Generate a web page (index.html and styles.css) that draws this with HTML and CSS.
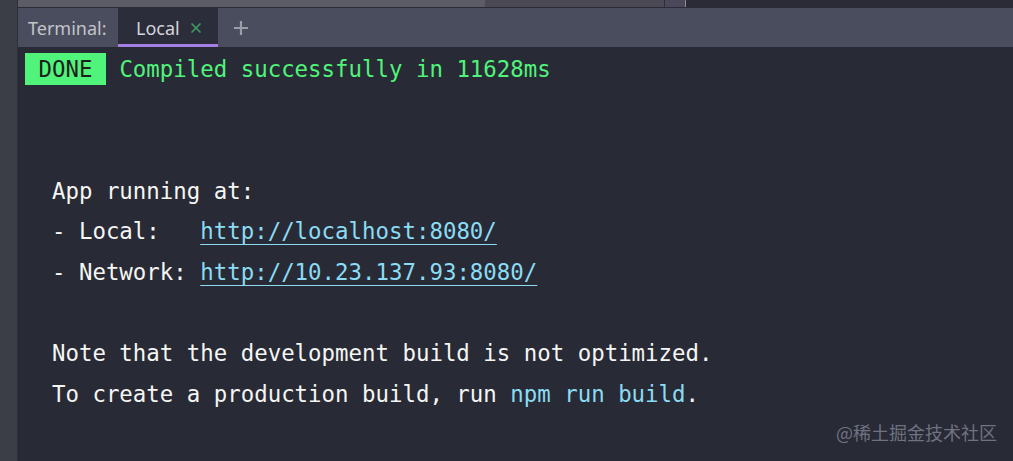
FILE: index.html
```html
<!DOCTYPE html>
<html>
<head>
<meta charset="utf-8">
<link rel="stylesheet" href="styles.css">
</head>
<body>
<div class="app">
  <div class="gutter"></div>
  <div class="main">
    <div class="topstrip">
      <div class="seg seg-a"></div>
      <div class="seg seg-b"></div>
      <div class="seg seg-c"></div>
      <div class="seg seg-d"></div>
    </div>
    <div class="tabbar">
      <div class="tab-label">Terminal:</div>
      <div class="tab active">
        <span class="tab-name">Local</span>
        <svg class="tab-close" width="12" height="12" viewBox="0 0 12 12"><path d="M1.5 1.5L10.5 10.5M10.5 1.5L1.5 10.5" stroke="#3f9b62" stroke-width="1.6" fill="none"/></svg>
      </div>
      <div class="tab-add">
        <svg width="16" height="16" viewBox="0 0 16 16"><path d="M8 1V15M1 8H15" stroke="#9a9ca6" stroke-width="2.2" fill="none"/></svg>
      </div>
    </div>
    <div class="term">
      <div class="line"><span class="badge"> DONE </span> <span class="green">Compiled successfully in 11628ms</span></div>
      <div class="line"></div>
      <div class="line"></div>
      <div class="line">  App running at:</div>
      <div class="line">  - Local:   <span class="link">http://localhost:8080/</span></div>
      <div class="line">  - Network: <span class="link">http://10.23.137.93:8080/</span></div>
      <div class="line"></div>
      <div class="line">  Note that the development build is not optimized.</div>
      <div class="line">  To create a production build, run <span class="cyan">npm run build</span>.</div>
    </div>
  </div>
</div>
<div class="watermark">@稀土掘金技术社区</div>
</body>
</html>
```

FILE: styles.css
```css
html, body {
  margin: 0;
  padding: 0;
  height: 100%;
  background: #282a36;
  overflow: hidden;
}
.app {
  display: flex;
  height: 461px;
}
.gutter {
  width: 18px;
  background: #3b3d47;
  border-right: 1px solid #2e2f39;
  box-sizing: border-box;
}
.main {
  flex: 1;
  display: flex;
  flex-direction: column;
}
.topstrip {
  height: 7px;
  display: flex;
  border-bottom: 1px solid #2b2c37;
}
.seg { height: 100%; }
.seg-a { width: 467px; background: #5b5c66; }
.seg-b { width: 179px; background: #4a4954; border-right: 1px solid #2e2e38; }
.seg-c { width: 20px; background: #4a485a; border-right: 1px solid #8a8a98; }
.seg-d { flex: 1; background: #2b2a37; }
.tabbar {
  height: 39px;
  background: #4a4d5e;
  display: flex;
  align-items: stretch;
  font-family: "Noto Sans", "Open Sans", sans-serif;
  font-size: 18px;
}
.tab-label {
  color: #c3c4ca;
  padding-left: 10px;
  width: 100px;
  box-sizing: border-box;
  display: flex;
  align-items: center;
}
.tab {
  width: 100px;
  background: #2b2d3a;
  border-bottom: 3px solid #a47ee3;
  box-sizing: border-box;
  display: flex;
  align-items: center;
  padding-left: 18px;
  padding-top: 3px;
}
.tab-name {
  color: #d4d5da;
}
.tab-close {
  margin-left: 10px;
}
.tab-add {
  display: flex;
  align-items: center;
  padding-left: 15px;
}
.term {
  flex: 1;
  padding: 2px 0 0 7px;
  font-family: "DejaVu Sans Mono", "Liberation Mono", monospace;
  font-size: 22.4px;
  color: #f5f5f2;
}
.line {
  height: 40.6px;
  line-height: 40.6px;
  white-space: pre;
}
.badge {
  display: inline-block;
  background: #50f47a;
  color: #1c1f1d;
  line-height: 32px;
}
.green {
  color: #50f47a;
}
.link {
  color: #8bdcf2;
  text-decoration: underline;
  text-underline-offset: 5px;
  text-decoration-thickness: 1px;
}
.cyan {
  color: #8bdcf2;
}
.watermark {
  position: absolute;
  right: 16px;
  top: 419px;
  font-family: "Noto Sans CJK SC", "Noto Sans", sans-serif;
  font-size: 18px;
  color: #6f7280;
}
```
